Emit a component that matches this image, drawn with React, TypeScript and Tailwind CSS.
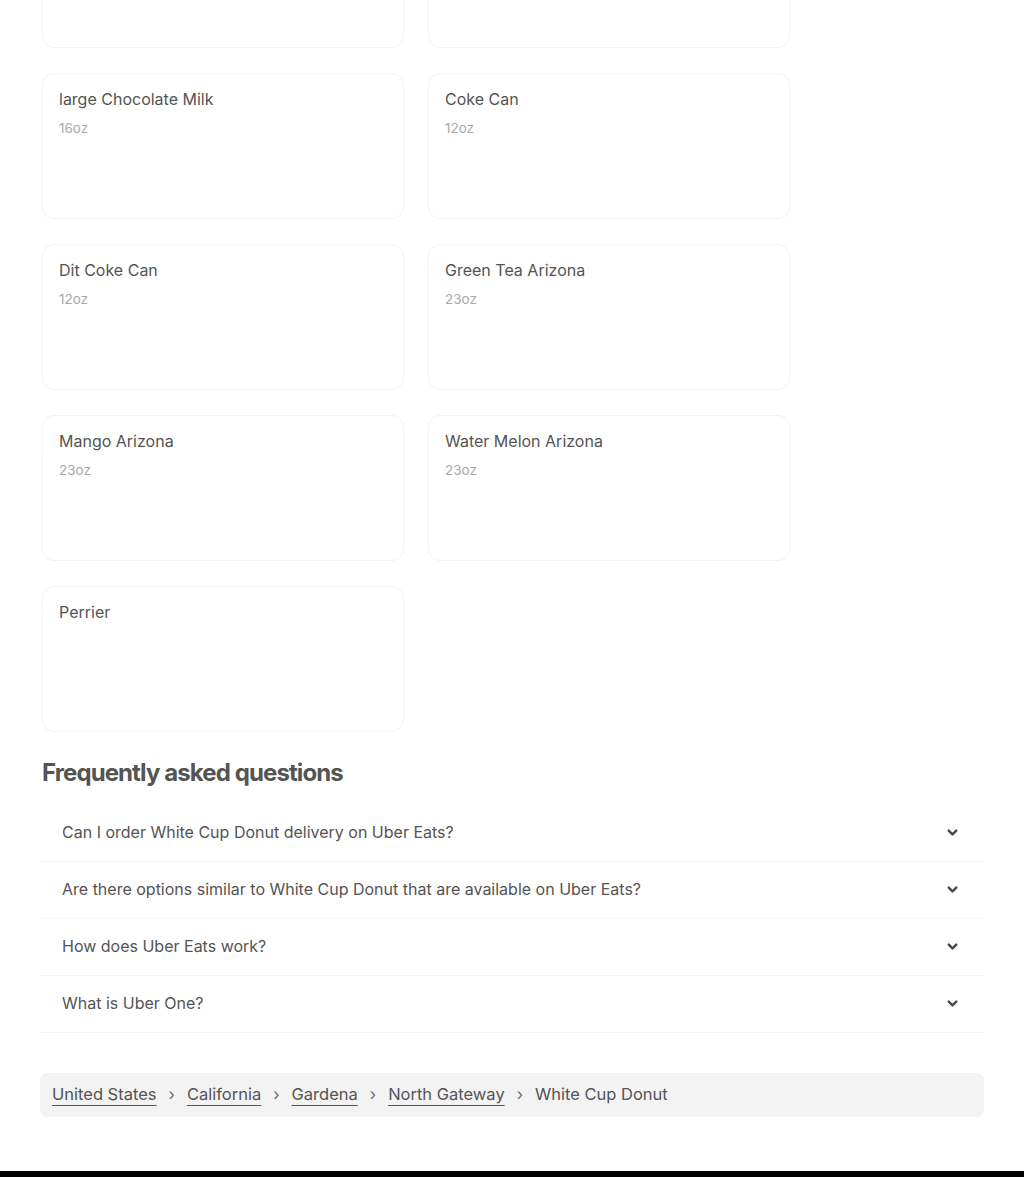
import { ChevronDown } from 'lucide-react';

const items = [
  { name: 'large Chocolate Milk', size: '16oz' },
  { name: 'Coke Can', size: '12oz' },
  { name: 'Dit Coke Can', size: '12oz' },
  { name: 'Green Tea Arizona', size: '23oz' },
  { name: 'Mango Arizona', size: '23oz' },
  { name: 'Water Melon Arizona', size: '23oz' },
  { name: 'Perrier', size: '' },
];

const faqs = [
  'Can I order White Cup Donut delivery on Uber Eats?',
  'Are there options similar to White Cup Donut that are available on Uber Eats?',
  'How does Uber Eats work?',
  'What is Uber One?',
];

const crumbs = ['United States', 'California', 'Gardena', 'North Gateway'];

function ItemCard({ name, size }: { name?: string; size?: string }) {
  return (
    <div className="h-[146px] rounded-xl border border-[#f3f3f3] bg-white px-4 pt-[13px]">
      {name && <div className="text-[16px] leading-6 text-[#545454]">{name}</div>}
      {size && <div className="mt-[7px] text-[13.5px] leading-5 text-[#a8a8a8]">{size}</div>}
    </div>
  );
}

export default function App() {
  return (
    <div className="min-h-[1177px] overflow-hidden bg-white" style={{ fontFamily: 'Inter, "Noto Sans", sans-serif' }}>
      {/* Menu items */}
      <div className="-mt-[98px] grid grid-cols-[362px_362px] gap-x-[24px] gap-y-[25px] pl-[42px]">
        <ItemCard />
        <ItemCard />
        {items.map((it) => (
          <ItemCard key={it.name} name={it.name} size={it.size} />
        ))}
      </div>

      {/* FAQ */}
      <div className="mx-10 mt-[25px]">
        <h2 className="pl-[2px] text-[24px] font-bold leading-8 tracking-[-0.9px] text-[#545454]">
          Frequently asked questions
        </h2>
        <div className="mt-4">
          {faqs.map((q) => (
            <div key={q} className="flex h-[57px] items-center justify-between border-b border-[#f3f3f3] pb-[2px] pl-[22px] pr-[24px]">
              <span className="text-[16px] text-[#545454]">{q}</span>
              <ChevronDown size={15} strokeWidth={4} className="text-[#4a4a4a]" />
            </div>
          ))}
        </div>

        {/* Breadcrumbs */}
        <div className="mt-[40px] flex h-[44px] items-center rounded-lg bg-[#f3f3f3] px-3 pb-[2px] text-[16.5px] text-[#545454]">
          {crumbs.map((c) => (
            <span key={c} className="flex items-center">
              <span className="underline decoration-1 underline-offset-[5px]">{c}</span>
              <span className="mx-[12px] text-[#6b6b6b]">›</span>
            </span>
          ))}
          <span>White Cup Donut</span>
        </div>
      </div>

      <div className="mt-[54px] h-10 bg-black" />
    </div>
  );
}
